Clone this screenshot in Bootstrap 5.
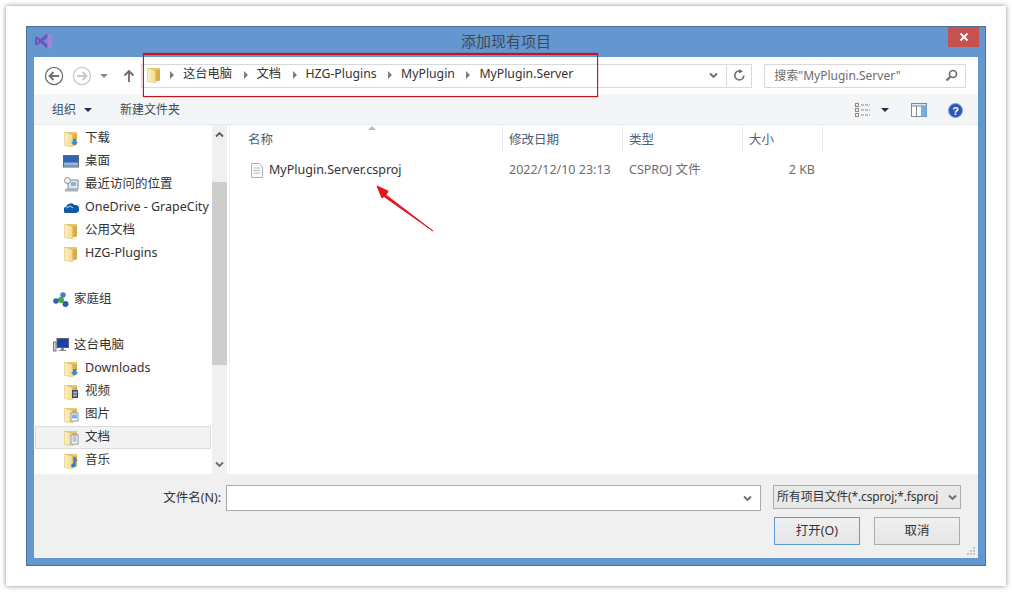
<!DOCTYPE html>
<html lang="zh-CN">
<head>
<meta charset="utf-8">
<title>添加现有项目</title>
<link rel="stylesheet" href="https://cdn.jsdelivr.net/npm/bootstrap@5.3.0/dist/css/bootstrap.min.css">
<style>
html,body{height:100%}
body{background:#fff;margin:0;padding:6px;width:1012px;height:592px;overflow:hidden;font-family:"Noto Sans","Noto Sans CJK SC",sans-serif;font-size:12.5px;line-height:1;color:#333}
.sheet{width:1000px;height:580px;padding:20px;background:#fff;box-shadow:0 0 5px rgba(0,0,0,.45);position:relative}
.win{width:960px;height:540px;background:#6496d0;border:1px solid #4f7195;padding:0 7px 7px;display:flex;flex-direction:column}
.titlebar{height:30px;flex:none;display:flex;align-items:center;justify-content:center;position:relative;font-size:15px;color:#3c4a58;padding-bottom:2px}
.vs{position:absolute;left:1px;top:6px}
.closex{position:absolute;right:-1px;top:0;width:31px;height:20px;background:#c75050;display:flex;align-items:center;justify-content:center}
.client{flex:1;background:#fff;display:flex;flex-direction:column;min-height:0}
.addr{height:37px;flex:none;display:flex;align-items:center;padding:0 12px 0 10px}
.navbtns{width:97px;flex:none;display:flex;align-items:center;height:24px}
.upb{margin-left:14px}
.addrbox{width:612px;height:24px;border:1px solid #d9d9d9;display:flex;align-items:center}
.crumbs{flex:1;display:flex;align-items:center;padding:0 0 2px 5px;font-size:12.25px}
.crumb{padding:0 11.5px 0 0}
.tri{width:0;height:0;border-left:4px solid #7c7c7c;border-top:4px solid transparent;border-bottom:4px solid transparent;margin:0 9px 0 0;flex:none}
.tri1{margin-left:9px}
.refresh{width:25px;height:22px;border-left:1px solid #d9d9d9;display:flex;align-items:center;justify-content:center}
.searchbox{width:202px;height:24px;border:1px solid #d9d9d9;margin-left:12px;display:flex;align-items:center;padding:0 7px 0 9px;color:#6d6d6d;justify-content:space-between;font-size:12px}
.tools{height:31px;flex:none;background:#f3f5f7;border-bottom:1px solid #e6e9ec;display:flex;align-items:center;padding:2px 15px 0 18px;color:#3b4a5c;font-size:12px}
.caret-d{width:0;height:0;border-top:4px solid #1f3050;border-left:4px solid transparent;border-right:4px solid transparent;flex:none}
.newf{margin-left:28px}
.gap-c{margin-left:10px}
.gap-p{margin-left:22px}
.gap-h{margin-left:21px}
.mid{flex:1;display:flex;min-height:0}
.tree{width:178px;flex:none;overflow:hidden;padding-top:2px}
.tr{height:23px;display:flex;align-items:center;padding-left:30px;white-space:nowrap}
.tr svg{margin-right:7px;flex:none}
.tr.top{padding-left:19px}
.tr.top svg{margin-right:5px}
.tr.sel{background:#f2f2f2;box-shadow:inset 0 0 0 1px #dcdcdc;margin:0 1px;padding-left:29px}
.sb{width:15px;flex:none;background:#f0f0f0;display:flex;flex-direction:column;align-items:center}
.sb-a{height:19px;flex:none;display:flex;align-items:center;justify-content:center}
.sb-thumb{width:100%;height:183px;margin-top:38px;background:#cdcdcd;flex:none}
.pane{flex:1;margin-left:2px;border-left:1px solid #f0f0f0;position:relative}
.heads{display:grid;grid-template-columns:273px 120px 120px 80px;height:28px;color:#4c607a;position:relative}
.heads>div{display:flex;align-items:center;border-right:1px solid #e8edf1;padding:2px 0 0 6px}
.heads>div:first-of-type{padding-left:18px}
.sortup{position:absolute;left:138px;top:1px;width:0;height:0;border-bottom:4px solid #a8c0d4;border-left:4px solid transparent;border-right:4px solid transparent}
.frow{display:grid;grid-template-columns:273px 120px 120px 72px;height:24px;margin-top:5px;align-items:center;color:#6d6d6d}
.frow>div{padding-left:6px}
.frow>.fn{padding-left:21px;display:flex;align-items:center;gap:6px;color:#333}
.frow>.sz{text-align:right;padding:0}
.foot{height:84px;flex:none;background:#f0f0f0;padding:11px 17px 0 0;position:relative}
.r1{display:flex;align-items:flex-start;justify-content:flex-end}
.lab{height:26px;display:flex;align-items:center;margin-right:5px}
.inp{width:535px;height:26px;background:#fff;border:1px solid #ababab;display:flex;align-items:center;justify-content:flex-end;padding-right:4px}
.sel2{width:188px;height:24px;margin-left:12px;background:#e9e9e9;border:1px solid #adadad;display:flex;align-items:center;justify-content:space-between;padding:0 3px;white-space:nowrap;font-size:12px;letter-spacing:-.15px}
.r2{display:flex;justify-content:flex-end;gap:14px;margin-top:6px;padding-right:1px}
.wbtn{width:86px;height:28px;padding:0;border-radius:0;border:1px solid #acacac;background:linear-gradient(#f0f0f0,#e5e5e5);font-size:12.5px;line-height:1;color:#333}
.wbtn.def{border-color:#5a9bd5}
.grip{position:absolute;right:2px;bottom:2px}
.redbox{position:absolute;left:137px;top:47px;width:455px;height:44px;border:1px solid #c2141e;border-top-width:2px;box-shadow:0 0 1px rgba(194,20,30,.9)}
.redarrow{position:absolute;left:360px;top:170px}
</style>
</head>
<body>
<svg width="0" height="0" class="d-block position-absolute">
<defs>
<linearGradient id="fg" x1="0" y1="0" x2="1" y2="0"><stop offset="0" stop-color="#fbf1c4"/><stop offset="1" stop-color="#f2dc8c"/></linearGradient>
<symbol id="folder" viewBox="0 0 14 16"><path d="M1 1H13V13.500L8 14.500V4Z" fill="#d9ad4c"/><path d="M1 1H13V3H9Z" fill="#e9c872"/><path d="M.5 1 8.500 3.500V16L.5 14.500Z" fill="url(#fg)" stroke="#dfc277" stroke-width=".6"/></symbol>
</defs>
</svg>
<div class="sheet">
<div class="win">
  <div class="titlebar">
    <svg class="vs" width="18" height="16" viewBox="0 0 18 16"><path d="M12.500 0 12.500 16 5.500 9.800 2 12.500 0 11.500 0 4.500 2 3.500 5.500 6.200Z" fill="#6f52bd"/><path d="M12.500 0 17 2 17 14 12.500 16Z" fill="#9d86db"/><path d="M12.500 4.500 12.500 11.500 8 8Z" fill="#6496d0"/><path d="M2 6 2 10 4 8Z" fill="#6496d0"/></svg>
    <span>添加现有项目</span>
    <div class="closex"><svg width="10" height="10" viewBox="0 0 10 10"><path d="M1.500 1.500 8.500 8.500M8.500 1.500 1.500 8.500" stroke="#fff" stroke-width="1.800"/></svg></div>
  </div>
  <div class="client">
    <div class="addr">
      <div class="navbtns">
        <svg width="20" height="20" viewBox="0 0 20 20"><circle cx="10" cy="10" r="8.600" fill="#fff" stroke="#6f6f6f" stroke-width="1.300"/><path d="M15 10H6M9.500 6 5.500 10 9.500 14" fill="none" stroke="#6f6f6f" stroke-width="1.800"/></svg>
        <svg class="ms-2" width="20" height="20" viewBox="0 0 20 20"><circle cx="10" cy="10" r="8.600" fill="#fff" stroke="#c9c9c9" stroke-width="1.300"/><path d="M5 10H14M10.500 6 14.500 10 10.500 14" fill="none" stroke="#c9c9c9" stroke-width="1.800"/></svg>
        <span class="caret-d ms-2" style="border-top-color:#8a8a8a"></span>
        <svg class="upb" width="14" height="14" viewBox="0 0 14 14"><path d="M7 13V2M2.500 6.500 7 2 11.500 6.500" fill="none" stroke="#6a6a6a" stroke-width="1.800"/></svg>
      </div>
      <div class="addrbox">
        <div class="crumbs">
          <svg width="14" height="16" viewBox="0 0 14 16"><use href="#folder"/></svg>
          <span class="tri tri1"></span><span class="crumb">这台电脑</span>
          <span class="tri"></span><span class="crumb">文档</span>
          <span class="tri"></span><span class="crumb">HZG-Plugins</span>
          <span class="tri"></span><span class="crumb">MyPlugin</span>
          <span class="tri"></span><span class="crumb">MyPlugin.Server</span>
        </div>
        <svg width="9" height="7" class="me-2" viewBox="0 0 9 7"><path d="M1 1.500 4.500 5 8 1.500" fill="none" stroke="#6a6a6a" stroke-width="1.800"/></svg>
        <div class="refresh"><svg width="13" height="13" viewBox="0 0 13 13"><path d="M10.800 6.500A4.500 4.500 0 1 1 7 2" fill="none" stroke="#6e6e6e" stroke-width="1.600"/><path d="M6 0 10 2.200 6 4.500Z" fill="#6e6e6e"/></svg></div>
      </div>
      <div class="searchbox"><span>搜索"MyPlugin.Server"</span><svg width="13" height="13" viewBox="0 0 13 13"><circle cx="8" cy="5" r="3.500" fill="none" stroke="#6e6e6e" stroke-width="1.700"/><path d="M5.500 7.500 1.500 11.500" stroke="#6e6e6e" stroke-width="2.200"/></svg></div>
    </div>
    <div class="tools">
      <span>组织</span><span class="caret-d ms-2"></span>
      <span class="newf">新建文件夹</span>
      <svg class="ms-auto" width="16" height="14" viewBox="0 0 16 14"><g fill="none" stroke="#8a8a8a"><rect x=".5" y=".5" width="3" height="3"/><rect x=".5" y="5.500" width="3" height="3"/><rect x=".5" y="10.500" width="3" height="3"/></g><path d="M6 2H15M6 7H15M6 12H15" stroke="#8a8a8a" stroke-dasharray="3 1"/></svg>
      <span class="caret-d gap-c"></span>
      <svg class="gap-p" width="16" height="14" viewBox="0 0 16 14"><rect x=".5" y=".5" width="15" height="13" fill="#fff" stroke="#7e8a96"/><rect x=".5" y=".5" width="15" height="2.500" fill="#dfe5ea" stroke="#7e8a96"/><rect x="10" y="3" width="5.500" height="10.500" fill="#6fb0ea"/><path d="M5.500 3V13.500" stroke="#7e8a96"/></svg>
      <svg class="gap-h" width="15" height="15" viewBox="0 0 15 15"><circle cx="7.500" cy="7.500" r="7" fill="#2a58b8" stroke="#8ba3c8"/><text x="7.500" y="11.500" text-anchor="middle" font-size="11" font-weight="700" fill="#fff" font-family="Liberation Sans">?</text></svg>
    </div>
    <div class="mid">
      <div class="tree">
        <div class="tr"><svg width="14" height="16"><use href="#folder"/><path d="M9 8h3v3h2l-3.500 4L7 11h2Z" fill="#2b8fe0"/></svg>下载</div>
        <div class="tr"><svg width="16" height="13" style="margin-left:-1px;margin-right:6px" viewBox="0 0 16 13"><rect x=".5" y=".5" width="15" height="11.500" fill="#2e66b4" stroke="#5b6875"/><rect x="1" y="7.500" width="14" height="2.500" fill="#8fb8e6"/><rect x="1" y="10" width="14" height="2" fill="#8a94a0"/></svg>桌面</div>
        <div class="tr"><svg width="15" height="15" style="margin-right:6px" viewBox="0 0 15 15"><rect x="4" y="3" width="10" height="9" fill="#dfeaf3" stroke="#7d8c99"/><circle cx="3.500" cy="3.500" r="3" fill="#f4f4f4" stroke="#8a8a8a"/><rect x="1" y="12" width="13" height="2.500" fill="#a9b2ba"/><path d="M7 6h5M7 8h5" stroke="#4d78b0"/></svg>最近访问的位置</div>
        <div class="tr"><svg width="15" height="11" style="margin-right:6px" viewBox="0 0 15 11"><path d="M3 11A3 3 0 0 1 2 5 5 5 0 0 1 10.500 3 4 4 0 0 1 12 11Z" fill="#0f5aa8"/><path d="M2.500 6 6 4 9 6" fill="none" stroke="#fff" stroke-width=".8"/></svg>OneDrive - GrapeCity</div>
        <div class="tr"><svg width="14" height="16"><use href="#folder"/></svg>公用文档</div>
        <div class="tr"><svg width="14" height="16"><use href="#folder"/></svg>HZG-Plugins</div>
        <div class="tr"></div>
        <div class="tr top"><svg width="16" height="16" viewBox="0 0 16 16"><path d="M3 9 8 8 10 3M8 8 12.500 12" stroke="#9cb8dc"/><circle cx="3" cy="9" r="2.800" fill="#2e62b8"/><circle cx="10" cy="3" r="2.800" fill="#4d7cc8"/><circle cx="12.500" cy="12" r="3" fill="#2c5cb0"/><circle cx="8" cy="8" r="3" fill="#3fa83f"/></svg>家庭组</div>
        <div class="tr"></div>
        <div class="tr top"><svg width="16" height="15" viewBox="0 0 16 15"><rect x="4" y=".5" width="11.500" height="9" fill="#1a3fa8" stroke="#55636f"/><path d="M8 10v2H6v1h7v-1h-2v-2Z" fill="#7c8790"/><rect x=".5" y="4" width="2.500" height="9" fill="#d5dade" stroke="#6c7780"/></svg>这台电脑</div>
        <div class="tr"><svg width="14" height="16"><use href="#folder"/><path d="M9 8h3v3h2l-3.500 4L7 11h2Z" fill="#2b8fe0"/></svg>Downloads</div>
        <div class="tr"><svg width="14" height="16"><use href="#folder"/><rect x="8" y="6" width="6" height="8" fill="#3a4654"/><rect x="9" y="7.500" width="4" height="2" fill="#9fb6cf"/><rect x="9" y="10.500" width="4" height="2" fill="#9fb6cf"/></svg>视频</div>
        <div class="tr"><svg width="15" height="16" style="margin-right:6px"><use href="#folder" width="14" height="16"/><rect x="7" y="6" width="7" height="8" fill="#fff" stroke="#8a9aa8"/><rect x="8" y="7.500" width="5" height="4" fill="#7fb4de"/></svg>图片</div>
        <div class="tr sel"><svg width="15" height="16" style="margin-right:6px"><use href="#folder" width="14" height="16"/><rect x="7" y="5" width="7" height="9" fill="#fff" stroke="#8a9aa8"/><path d="M8.500 7h4M8.500 9h4M8.500 11h4" stroke="#6f88a3"/></svg>文档</div>
        <div class="tr"><svg width="15" height="16" style="margin-right:6px"><use href="#folder" width="14" height="16"/><path d="M10.500 4 14 8 11.500 7.500V12.500A2.200 2 0 1 1 9.500 10.600V4Z" fill="#2e7cc8"/></svg>音乐</div>
      </div>
      <div class="sb">
        <div class="sb-a"><svg width="9" height="7" viewBox="0 0 9 7"><path d="M1 5.500 4.500 2 8 5.500" fill="none" stroke="#5a5a5a" stroke-width="1.800"/></svg></div>
        <div class="sb-thumb"></div>
        <div class="sb-a mt-auto"><svg width="9" height="7" viewBox="0 0 9 7"><path d="M1 1.500 4.500 5 8 1.500" fill="none" stroke="#6a6a6a" stroke-width="1.800"/></svg></div>
      </div>
      <div class="pane">
        <div class="heads"><i class="sortup"></i><div>名称</div><div>修改日期</div><div>类型</div><div>大小</div></div>
        <div class="frow">
          <div class="fn"><svg width="12" height="15" viewBox="0 0 12 15"><path d="M.5.500H8L11.500 4V14.500H.5Z" fill="#fafafa" stroke="#a9b0b6"/><path d="M2.500 5H9M2.500 7.500H9M2.500 10H9" stroke="#b6bcc2"/></svg>MyPlugin.Server.csproj</div>
          <div>2022/12/10 23:13</div><div>CSPROJ 文件</div><div class="sz">2 KB</div>
        </div>
      </div>
    </div>
    <div class="foot">
      <div class="r1">
        <div class="lab">文件名(N):</div>
        <div class="inp"><svg width="9" height="7" class="me-1" viewBox="0 0 9 7"><path d="M1 1.500 4.500 5 8 1.500" fill="none" stroke="#6a6a6a" stroke-width="1.800"/></svg></div>
        <div class="sel2"><span>所有项目文件(*.csproj;*.fsproj</span><svg width="9" height="7" class="flex-none ms-1" viewBox="0 0 9 7"><path d="M1 1.500 4.500 5 8 1.500" fill="none" stroke="#6a6a6a" stroke-width="1.800"/></svg></div>
      </div>
      <div class="r2">
        <button type="button" class="btn wbtn def">打开(O)</button>
        <button type="button" class="btn wbtn">取消</button>
      </div>
      <svg class="grip" width="9" height="9" viewBox="0 0 9 9" fill="#c2c2c2"><rect x="6" y="0" width="2" height="2"/><rect x="3" y="3" width="2" height="2"/><rect x="6" y="3" width="2" height="2"/><rect x="0" y="6" width="2" height="2"/><rect x="3" y="6" width="2" height="2"/><rect x="6" y="6" width="2" height="2"/></svg>
    </div>
  </div>
</div>
<div class="redbox"></div>
<svg class="redarrow" width="70" height="62" viewBox="0 0 70 62"><path d="M67 55 20 19 22 15 11 10 16 22 18 20.500Z" fill="#e8141c" stroke="#e8141c" stroke-linejoin="round"/></svg>
</div>
</body>
</html>
